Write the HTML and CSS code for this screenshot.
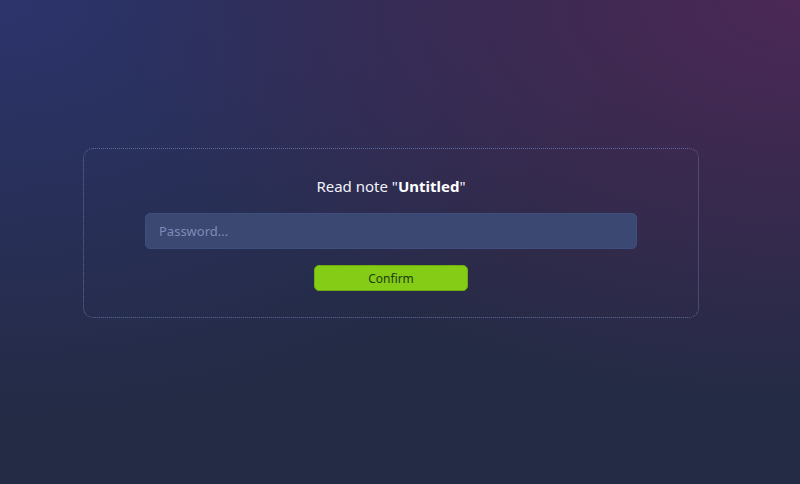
FILE: index.html
```html
<!DOCTYPE html>
<html lang="en">
<head>
<meta charset="utf-8">
<title>Read note</title>
<link rel="stylesheet" href="styles.css">
</head>
<body>
<main class="page">
  <form class="card">
    <h1 class="title">Read note "<strong>Untitled</strong>"</h1>
    <input class="password" type="password" placeholder="Password...">
    <button class="confirm" type="button">Confirm</button>
  </form>
</main>
</body>
</html>
```

FILE: styles.css
```css
html, body {
  margin: 0;
  height: 100%;
}
body {
  font-family: "Noto Sans", "Open Sans", sans-serif;
  background-color: #242b45;
  background-image:
    radial-gradient(ellipse 680px 400px at 100% 0%, rgba(78, 40, 88, 0.95), rgba(78, 40, 88, 0) 100%),
    radial-gradient(ellipse 650px 420px at 0% 0%, rgba(44, 52, 108, 1), rgba(44, 52, 108, 0) 100%);
  color: #fff;
}
.page {
  display: flex;
  padding: 148px 0 0 83px;
}
.card {
  box-sizing: border-box;
  width: 616px;
  height: 170px;
  border: 1px dotted #5f6ca0;
  border-radius: 10px;
  padding: 25px 61px 0;
  display: flex;
  flex-direction: column;
  align-items: center;
}
.title {
  margin: 0;
  font-size: 15px;
  font-weight: 400;
  line-height: 24px;
  color: #f1f3f8;
}
.title strong {
  font-weight: 700;
  color: #fff;
}
.password {
  box-sizing: border-box;
  margin-top: 15px;
  width: 492px;
  height: 36px;
  border: 1px solid #3f4e7c;
  border-radius: 5px;
  background: #3a4872;
  padding: 0 13px;
  font-family: inherit;
  font-size: 13px;
  color: #dfe4f2;
  outline: none;
}
.password::placeholder {
  color: #7f8bb8;
}
.confirm {
  margin-top: 16px;
  width: 154px;
  height: 26px;
  border: 1px solid #6fae12;
  border-radius: 5px;
  background: #84cc16;
  font-family: inherit;
  font-size: 12px;
  color: #1d3d0c;
  padding: 0;
}
```
